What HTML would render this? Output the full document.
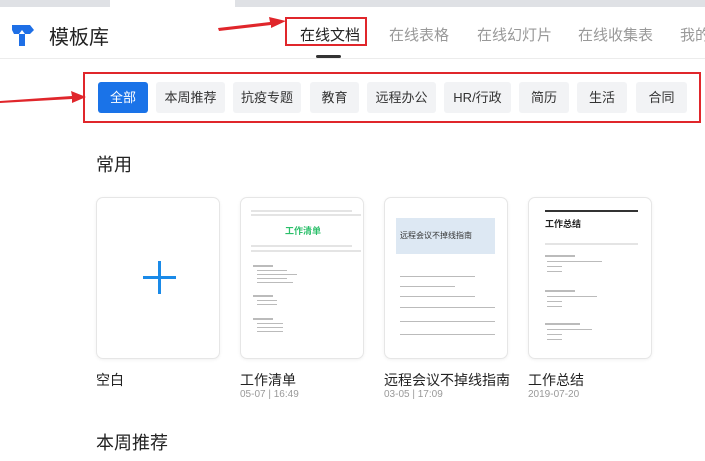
<!DOCTYPE html>
<html><head><meta charset="utf-8"><style>
*{margin:0;padding:0;box-sizing:border-box}
body{width:705px;height:461px;overflow:hidden;background:#fff;font-family:"Liberation Sans","Noto Sans CJK SC",sans-serif;position:relative;color:#222}
.a{position:absolute;white-space:nowrap}
.chip{position:absolute;top:82px;height:31px;background:#f2f3f5;border-radius:3px;font-size:13px;color:#333;text-align:center;line-height:31px;white-space:nowrap}
.nav{position:absolute;top:24px;font-size:15px;color:#999;white-space:nowrap}
.card{position:absolute;top:197px;width:124px;height:162px;border:1px solid #e6e6e6;border-radius:7px;background:#fff;box-shadow:0 1px 3px rgba(0,0,0,.06);overflow:hidden}
.lbl{position:absolute;top:370px;font-size:14px;color:#222;white-space:nowrap}
.dt{position:absolute;top:389px;font-size:10px;color:#999}
.ln{position:absolute;height:2px;background:#e4e4e4}
.t{position:absolute;height:2px;background:#bbb}
</style></head><body>
<div class="a" style="left:0;top:0;width:705px;height:7px;background:#dfe1e5"></div>
<div class="a" style="left:110px;top:0;width:125px;height:7px;background:#fff"></div>
<div class="a" style="left:0;top:58px;width:705px;height:1px;background:#ececec"></div>
<svg class="a" style="left:9px;top:24px" width="26" height="23" viewBox="0 0 26 23"><path d="M3 1H21L25 6L21 10H16V22H10V10H5L3 6Z" fill="#1e6fe6"/><path d="M10 10L13 6L16 10Z" fill="#fff"/></svg>
<div class="a" style="left:49px;top:21px;font-size:20px;color:#222">模板库</div>
<div class="nav" style="left:300px;color:#222">在线文档</div>
<div class="nav" style="left:389px">在线表格</div>
<div class="nav" style="left:477px">在线幻灯片</div>
<div class="nav" style="left:578px">在线收集表</div>
<div class="nav" style="left:680px">我的</div>
<div class="a" style="left:316px;top:55px;width:25px;height:3px;background:#333;border-radius:2px"></div>
<div class="a" style="left:285px;top:17px;width:82px;height:29px;border:2px solid #e0262b"></div>
<div class="a" style="left:83px;top:72px;width:618px;height:51px;border:2px solid #e0262b"></div>
<div class="chip" style="left:98px;width:50px;background:#1a73e8;color:#fff">全部</div>
<div class="chip" style="left:156px;width:69px">本周推荐</div>
<div class="chip" style="left:233px;width:68px">抗疫专题</div>
<div class="chip" style="left:310px;width:49px">教育</div>
<div class="chip" style="left:367px;width:69px">远程办公</div>
<div class="chip" style="left:444px;width:67px">HR/行政</div>
<div class="chip" style="left:519px;width:50px">简历</div>
<div class="chip" style="left:577px;width:50px">生活</div>
<div class="chip" style="left:636px;width:51px">合同</div>
<svg class="a" style="left:0;top:0" width="705" height="130"><path d="M0 101L72 96L71 91L86 97L72 103L72 99L0 103Z" fill="#e0262b"/><path d="M218 28L270 22L269 17L286 21L271 28L271 25L219 31Z" fill="#e0262b"/></svg>
<div class="a" style="left:96px;top:151px;font-size:18px">常用</div>
<div class="card" style="left:96px"><div class="a" style="left:46px;top:78px;width:33px;height:3px;background:#1a8ae8"></div><div class="a" style="left:61px;top:63px;width:3px;height:33px;background:#1a8ae8"></div></div>
<div class="card" style="left:240px">
<div class="ln" style="left:10px;top:12px;width:101px"></div><div class="ln" style="left:10px;top:16px;width:110px"></div>
<div class="a" style="left:0;width:124px;top:26px;text-align:center;font-size:9px;color:#2bbf6a;font-weight:bold">工作清单</div>
<div class="ln" style="left:10px;top:47px;width:101px"></div><div class="ln" style="left:10px;top:52px;width:110px"></div>
<div class="t" style="left:12px;top:67px;width:20px"></div><div class="t" style="left:16px;top:72px;width:30px;height:1px"></div><div class="t" style="left:16px;top:76px;width:40px;height:1px"></div><div class="t" style="left:16px;top:80px;width:30px;height:1px"></div><div class="t" style="left:16px;top:84px;width:36px;height:1px"></div>
<div class="t" style="left:12px;top:97px;width:20px"></div><div class="t" style="left:16px;top:102px;width:20px;height:1px"></div><div class="t" style="left:16px;top:106px;width:20px;height:1px"></div>
<div class="t" style="left:12px;top:120px;width:20px"></div><div class="t" style="left:16px;top:125px;width:26px;height:1px"></div><div class="t" style="left:16px;top:129px;width:26px;height:1px"></div><div class="t" style="left:16px;top:133px;width:26px;height:1px"></div>
</div>
<div class="card" style="left:384px">
<div class="a" style="left:11px;top:20px;width:99px;height:36px;background:#dde8f3"></div>
<div class="a" style="left:15px;top:32px;font-size:8px;color:#333">远程会议不掉线指南</div>
<div class="t" style="left:15px;top:78px;width:75px;height:1px"></div><div class="t" style="left:15px;top:88px;width:55px;height:1px"></div><div class="t" style="left:15px;top:98px;width:75px;height:1px"></div><div class="t" style="left:15px;top:109px;width:95px;height:1px"></div><div class="t" style="left:15px;top:123px;width:95px;height:1px"></div><div class="t" style="left:15px;top:136px;width:95px;height:1px"></div>
</div>
<div class="card" style="left:528px">
<div class="a" style="left:16px;top:12px;width:93px;height:2px;background:#333"></div>
<div class="a" style="left:16px;top:19px;font-size:9px;font-weight:bold;color:#222">工作总结</div>
<div class="ln" style="left:16px;top:45px;width:93px"></div>
<div class="t" style="left:16px;top:57px;width:30px"></div><div class="t" style="left:18px;top:63px;width:55px;height:1px"></div><div class="t" style="left:18px;top:68px;width:15px;height:1px"></div><div class="t" style="left:18px;top:73px;width:15px;height:1px"></div>
<div class="t" style="left:16px;top:92px;width:30px"></div><div class="t" style="left:18px;top:98px;width:50px;height:1px"></div><div class="t" style="left:18px;top:103px;width:15px;height:1px"></div><div class="t" style="left:18px;top:108px;width:15px;height:1px"></div>
<div class="t" style="left:16px;top:125px;width:35px"></div><div class="t" style="left:18px;top:131px;width:45px;height:1px"></div><div class="t" style="left:18px;top:136px;width:15px;height:1px"></div><div class="t" style="left:18px;top:141px;width:15px;height:1px"></div>
</div>
<div class="lbl" style="left:96px">空白</div>
<div class="lbl" style="left:240px">工作清单</div><div class="dt" style="left:240px">05-07 | 16:49</div>
<div class="lbl" style="left:384px">远程会议不掉线指南</div><div class="dt" style="left:384px">03-05 | 17:09</div>
<div class="lbl" style="left:528px">工作总结</div><div class="dt" style="left:528px">2019-07-20</div>
<div class="a" style="left:96px;top:429px;font-size:18px">本周推荐</div>
</body></html>
